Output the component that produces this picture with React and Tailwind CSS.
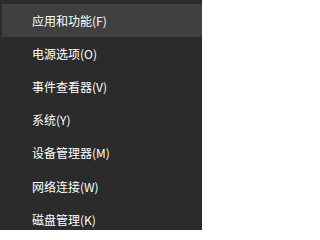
const items = [
  '应用和功能(F)',
  '电源选项(O)',
  '事件查看器(V)',
  '系统(Y)',
  '设备管理器(M)',
  '网络连接(W)',
  '磁盘管理(K)',
];

export default function App() {
  return (
    <div className="w-[202px] h-[230px] overflow-hidden bg-[#2b2b2b] pt-[4px] text-[12px] text-white font-['Microsoft_YaHei','Noto_Sans_CJK_SC',sans-serif]">
      {items.map((label, i) => (
        <div key={label}
             className={i === 0
                 ? 'h-[33.2px] flex items-center bg-[#404040] ml-[2px] pl-[30px]'
                 : 'h-[33.2px] flex items-center pl-[32px]'}>
          {label}
        </div>
      ))}
    </div>
  );
}
